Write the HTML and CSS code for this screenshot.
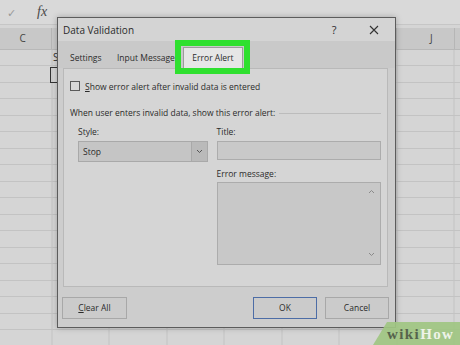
FILE: index.html
```html
<!DOCTYPE html>
<html lang="en">
<head>
  <meta charset="UTF-8">
  <title>Data Validation - Error Alert</title>
  <link rel="stylesheet" href="styles.css">
</head>
<body>
  <div class="sheet">
    <div class="formula-bar">
      <span class="fb-check">&#10003;</span>
      <span class="fb-fx">fx</span>
    </div>
    <div class="col-headers">
      <div class="col-head">C</div>
      <div class="col-head"></div>
      <div class="col-head"></div>
      <div class="col-head"></div>
      <div class="col-head"></div>
      <div class="col-head"></div>
      <div class="col-head"></div>
      <div class="col-head col-j">J</div>
    </div>
    <div class="grid">
      <div class="cell cell-text">S</div>
      <div class="cell cell-selected"></div>
    </div>
  </div>

  <div class="dialog">
    <div class="titlebar">
      <span class="title">Data Validation</span>
      <span class="tb-btn tb-help">?</span>
      <span class="tb-btn tb-close">
        <svg width="10" height="10" viewBox="0 0 10 10"><path d="M1 1L9 9M9 1L1 9" stroke="#333" stroke-width="1.1" fill="none"/></svg>
      </span>
    </div>

    <div class="tabs">
      <div class="tab tab-settings">Settings</div>
      <div class="tab tab-input">Input Message</div>
      <div class="tab tab-active">Error Alert<div class="highlight"></div></div>
    </div>

    <div class="panel">
      <div class="check-row">
        <span class="checkbox"></span>
        <span><u>S</u>how error alert after invalid data is entered</span>
      </div>
      <div class="section-head">When user enters invalid data, show this error alert:</div>
      <div class="fields">
        <div class="field-col field-left">
          <div class="label">Style:</div>
          <div class="select">
            <span class="select-value">Stop</span>
            <span class="select-arrow">
              <svg width="7" height="5" viewBox="0 0 7 5"><path d="M1 1L3.5 3.5L6 1" stroke="#555" stroke-width="1" fill="none"/></svg>
            </span>
          </div>
        </div>
        <div class="field-col field-right">
          <div class="label">Title:</div>
          <div class="input"></div>
          <div class="label label-msg">Error message:</div>
          <div class="textarea">
            <svg width="7" height="5" viewBox="0 0 7 5"><path d="M1 4L3.5 1.5L6 4" stroke="#8a8a8a" stroke-width="1" fill="none"/></svg>
            <svg width="7" height="5" viewBox="0 0 7 5"><path d="M1 1L3.5 3.5L6 1" stroke="#8a8a8a" stroke-width="1" fill="none"/></svg>
          </div>
        </div>
      </div>
    </div>

    <div class="footer">
      <div class="btn btn-clear"><u>C</u>lear All</div>
      <div class="btn btn-ok">OK</div>
      <div class="btn">Cancel</div>
    </div>
  </div>

  <div class="watermark"><span class="wm-wiki">wiki</span><span class="wm-how">How</span></div>
</body>
</html>
```

FILE: styles.css
```css
body { margin: 0; width: 460px; height: 345px; overflow: hidden; position: relative; font-family: "Open Sans", sans-serif; color: #2b2b2b; background: #d5d5d5; }

/* spreadsheet behind the dialog */
.formula-bar { height: 24px; background: #d9d9d9; border-bottom: 1px solid #c6c6c6; display: flex; align-items: center; }
.fb-check { margin-left: 7px; color: #999; font-size: 11px; }
.fb-fx { margin-left: 21px; font-family: "Liberation Serif", serif; font-style: italic; font-size: 14px; color: #4a4a4a; }
.col-headers { margin-top: 3px; margin-left: -5.5px; height: 21px; display: flex; background: #c8c8c8; border-bottom: 1px solid #b8b8b8; }
.col-head { flex: none; width: 57.5px; box-sizing: border-box; border-right: 1px solid #b6b6b6; text-align: center; line-height: 21px; font-size: 10px; color: #444; }
.col-j { padding-left: 12px; }
.grid {
  height: 295px;
  background:
    repeating-linear-gradient(to bottom, transparent 0 15.5px, #c3c3c3 15.5px 16.5px),
    repeating-linear-gradient(to right, transparent 0 56.5px, #c3c3c3 56.5px 57.5px);
  background-position: 0 0, -5.5px 0;
}
.cell { margin-left: 51px; width: 57px; height: 16.5px; box-sizing: border-box; }
.cell-text { font-size: 10px; line-height: 15px; padding-left: 2px; color: #333; }
.cell-selected { border: 1px solid #333; margin-left: 50px; }

/* dialog window */
.dialog { position: absolute; left: 57px; top: 17px; width: 339px; height: 311px; box-sizing: border-box; border: 1px solid #5c5c5c; background: #cdcdcd; box-shadow: 0 0 6px rgba(0, 0, 0, 0.25); display: flex; flex-direction: column; }
.titlebar { height: 23px; flex: none; display: flex; align-items: center; padding: 0 11px 0 5px; background: #d4d4d4; font-size: 10px; }
.title { flex: 1; }
.tb-btn { width: 20px; display: flex; justify-content: center; }
.tb-help { margin-right: 20px; font-size: 11px; }

.tabs { height: 27px; flex: none; display: flex; align-items: flex-end; padding-left: 12px; background: #c9c9c9; font-size: 8.5px; }
.tab { height: 21px; line-height: 21px; }
.tab-settings { width: 47px; }
.tab-input { width: 66px; }
.tab-active { width: 60px; box-sizing: border-box; background: #e6e6e6; border: 1px solid #9c9c9c; border-bottom: none; text-align: center; line-height: 20px; position: relative; }
.highlight { position: absolute; left: -9px; right: -8px; top: -8px; bottom: -6px; border: 6px solid #2fe02f; z-index: 2; }

.panel { height: 219px; flex: none; margin: 0 7px 0 5px; box-sizing: border-box; border: 1px solid #b9b9b9; background: #d5d5d5; padding: 0 6px; font-size: 8.5px; }
.check-row { margin-top: 11px; height: 12px; display: flex; align-items: center; }
.checkbox { width: 10px; height: 10px; box-sizing: border-box; border: 1px solid #5a5a5a; background: #d9d9d9; margin-right: 5px; }
.section-head { margin-top: 15px; line-height: 12px; display: flex; align-items: center; }
.section-head::after { content: ""; flex: 1; height: 1px; background: #bcbcbc; margin-left: 4px; }
.fields { margin: 7px 0 0 8px; display: flex; gap: 9px; }
.field-left { width: 130px; }
.field-right { width: 165px; }
.label { line-height: 12px; }
.label-msg { margin-top: 8px; }
.select { margin-top: 3px; height: 21px; box-sizing: border-box; display: flex; border: 1px solid #a9a9a9; background: #c5c5c5; }
.select-value { flex: 1; padding-left: 4px; line-height: 19px; }
.select-arrow { width: 15px; border-left: 1px solid #a9a9a9; background: #bababa; display: flex; align-items: center; justify-content: center; }
.input { margin-top: 3px; height: 19px; box-sizing: border-box; border: 1px solid #acacac; background: #c9c9c9; }
.textarea { margin-top: 2px; height: 83px; box-sizing: border-box; border: 1px solid #acacac; background: #c8c8c8; display: flex; flex-direction: column; justify-content: space-between; align-items: flex-end; padding: 6px 5px 7px 0; }

.footer { flex: 1; display: flex; align-items: flex-start; gap: 8px; padding: 10px 6px 0 4px; }
.btn { width: 64px; height: 22px; box-sizing: border-box; border: 1px solid #a8a8a8; background: #cbcbcb; font-size: 8.5px; line-height: 20px; text-align: center; }
.btn-clear { width: 65px; margin-right: auto; }
.btn-ok { border-color: #4d6da6; }

/* wikiHow mark */
.watermark { position: absolute; left: 370px; top: 320px; width: 90px; height: 25px; box-sizing: border-box; padding: 7px 0 0 17px; background: rgba(160, 198, 130, 0.92); clip-path: polygon(3px 100%, 17px 2px, 100% 2px, 100% 100%); font-family: "Liberation Serif", serif; font-weight: bold; font-size: 15px; line-height: 1; letter-spacing: 1.4px; }
.wm-wiki { color: #56634c; }
.wm-how { color: #eef3e8; }
```
